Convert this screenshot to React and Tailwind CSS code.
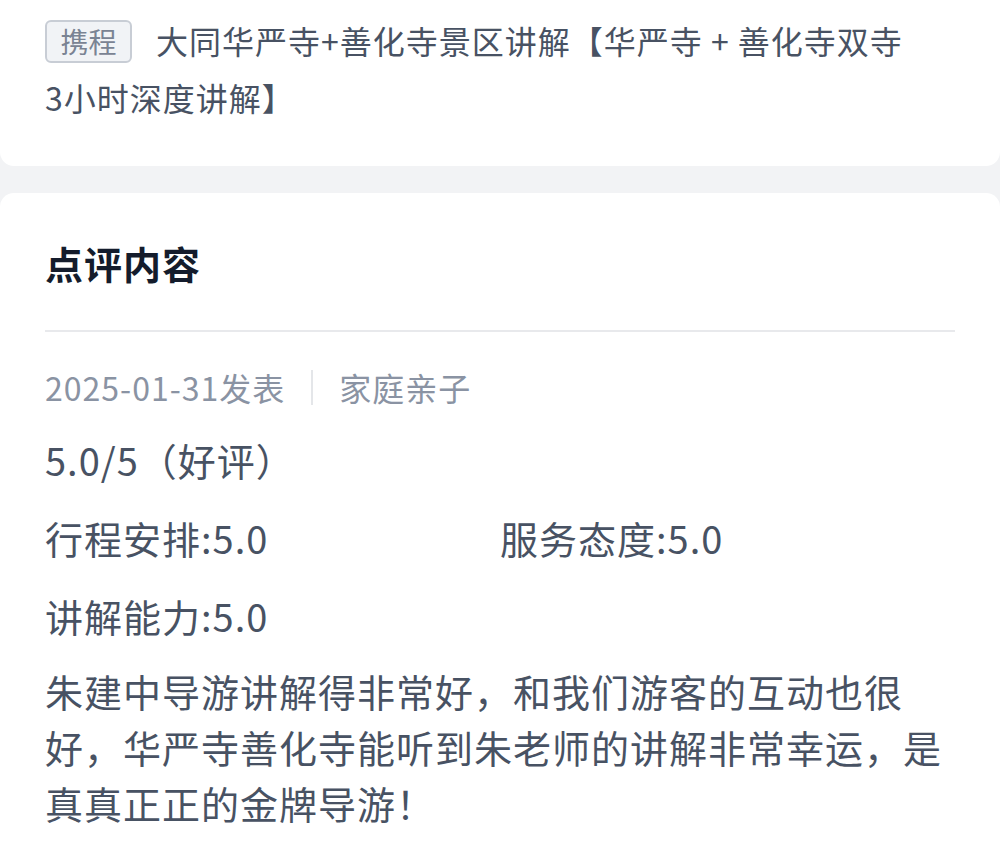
export default function App() {
  const font = { fontFamily: '"Noto Sans CJK SC", "Noto Sans", sans-serif' };
  return (
    <div className="w-[1000px] h-[841px] overflow-hidden bg-[#f2f3f5] flex flex-col" style={font}>
      <div className="bg-white rounded-b-[14px] pl-[45px] pr-[88px] pt-[12px] pb-[40px]">
        <p className="text-[32px] leading-[57px] tracking-[1px] text-[#485263]">
          <span className="inline-flex items-center justify-center align-top mt-[7.5px] mr-[24px] w-[87px] h-[43px] rounded-[6px] border-2 border-[#c8cdd5] bg-[#f1f3f6] text-[28px] leading-none tracking-[0px] text-[#7a8393]">
            携程
          </span>
          大同华严寺+善化寺景区讲解【华严寺 + 善化寺双寺3小时深度讲解】
        </p>
      </div>
      <div className="mt-[27px] flex-1 bg-white rounded-t-[14px] px-[45px] pt-[48px]">
        <h2 className="text-[38px] leading-[44px] font-bold tracking-[1px] text-[#141c2c]">点评内容</h2>
        <div className="mt-[45px] h-[2px] bg-[#e8e9ec]" />
        <div className="mt-[35px] flex items-center text-[32px] leading-[40px] tracking-[1px] text-[#8a93a3]">
          <span>2025-01-31发表</span>
          <span className="mx-[26px] w-[2px] h-[35px] bg-[#e4e6e9]" />
          <span>家庭亲子</span>
        </div>
        <div className="text-[38px] leading-[56px] tracking-[1px] text-[#485263]">
          <p className="mt-[25px]">5.0/5（好评）</p>
          <div className="mt-[22px] grid grid-cols-2 gap-y-[22px]">
            <p>行程安排:5.0</p>
            <p>服务态度:5.0</p>
            <p>讲解能力:5.0</p>
          </div>
          <p className="mt-[19px]">
            朱建中导游讲解得非常好，和我们游客的互动也很好，华严寺善化寺能听到朱老师的讲解非常幸运，是真真正正的金牌导游！
          </p>
        </div>
      </div>
    </div>
  );
}
